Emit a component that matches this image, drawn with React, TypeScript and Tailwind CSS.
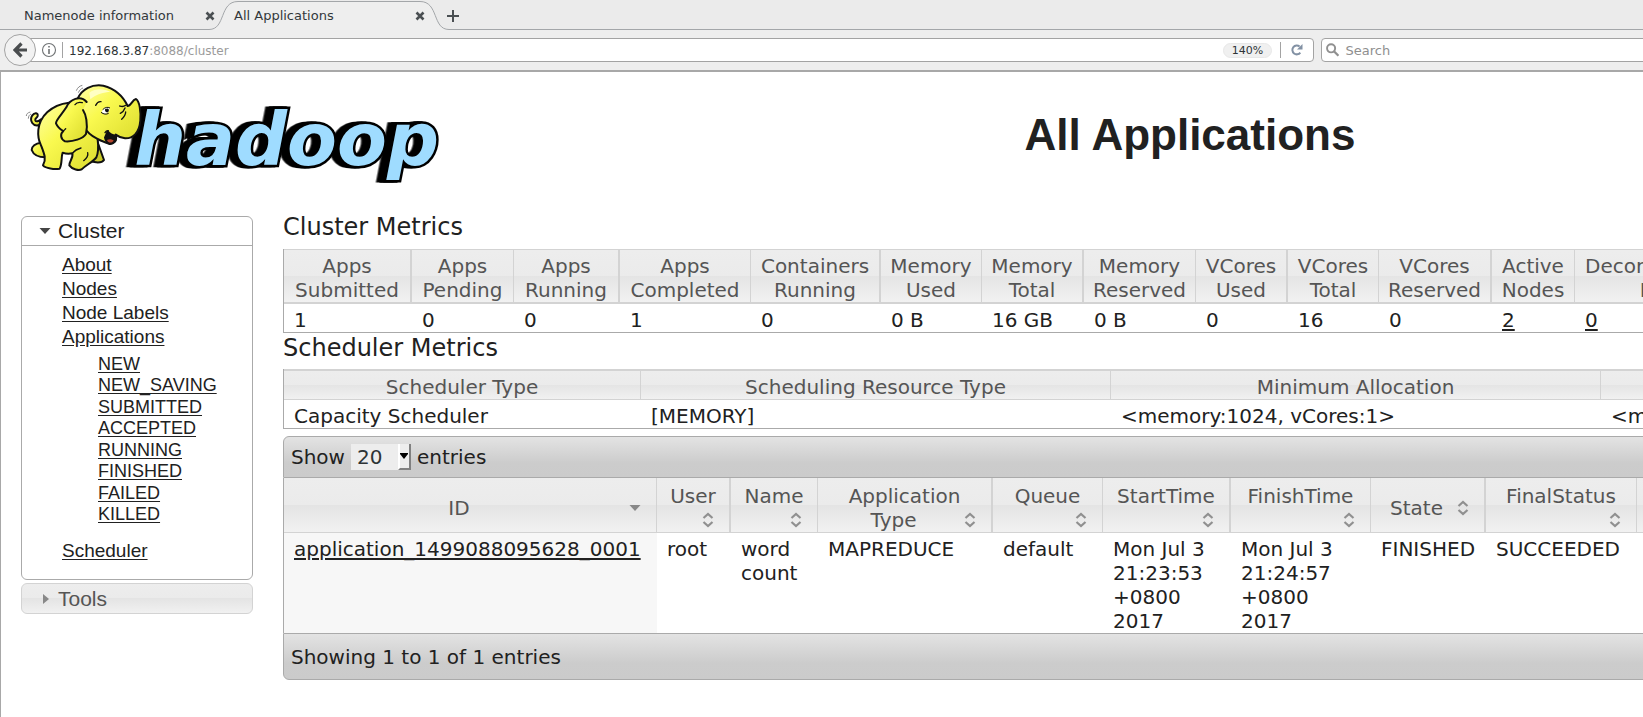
import React from "react";

const HEAD_BG = "bg-[linear-gradient(#ededed_0%,#ebebeb_50%,#e4e4e4_50%,#f1f1f1_100%)]";
const BAR_BG = "bg-[linear-gradient(#e3e3e3_0%,#cccccc_65%,#cbcbcb_100%)]";

function CloseIcon() {
  return (
    <svg width="10" height="10" viewBox="0 0 10 10" stroke="#4a4f52" strokeWidth="2.6" aria-hidden="true">
      <path d="M1.5 1.5 8.5 8.5M8.5 1.5 1.5 8.5" />
    </svg>
  );
}

function TabStrip() {
  return (
    <div className="relative flex h-[30px] bg-[#ebebeb] pt-0.5 text-[13px] text-[#33383b]">
      <svg className="absolute inset-0 h-[30px] w-full" aria-hidden="true">
        <path
          d="M209 29.5C226 29.5 219 1.5 238 1.5H420C439 1.5 432 29.5 449 29.5V31H209Z"
          fill="#eeeeee"
        />
        <path
          d="M0 29.5H209C226 29.5 219 1.5 238 1.5H420C439 1.5 432 29.5 449 29.5H4000"
          fill="none"
          stroke="#a3a6a9"
        />
      </svg>
      <div className="relative flex w-[234px] items-center justify-between pl-6 pr-[19px]">
        <a href="#namenode">Namenode information</a>
        <button aria-label="Close Namenode information"><CloseIcon /></button>
      </div>
      <div className="relative flex w-[209px] items-center justify-between pr-[18px]">
        <a href="#applications">All Applications</a>
        <button aria-label="Close All Applications"><CloseIcon /></button>
      </div>
      <button className="relative ml-1" aria-label="New tab">
        <svg width="12" height="12" viewBox="0 0 12 12" stroke="#4a4f52" strokeWidth="2">
          <path d="M6 0V12M0 6H12" />
        </svg>
      </button>
    </div>
  );
}

function NavBar() {
  return (
    <div className="flex h-[42px] items-center border-b-2 border-[#a8a8a8] bg-[#eeeeee] pl-1 text-[13px]">
      <button
        className="z-10 grid size-8 shrink-0 place-items-center rounded-full border border-[#a3a3a3] bg-[#f2f2f2]"
        aria-label="Back"
      >
        <svg width="14" height="16" viewBox="0 0 14 16" fill="none" stroke="#4a4d4f" strokeWidth="3.2">
          <path d="M8.5 1.5 2 8 8.5 14.5M2 8H14" />
        </svg>
      </button>
      <div className="-ml-2 flex h-6 w-[1286px] shrink-0 items-center rounded-r-sm border border-[#a3a3a3] bg-white pl-3">
        <svg width="16" height="16" viewBox="0 0 16 16" fill="none" stroke="#6f7274" aria-hidden="true">
          <circle cx="8" cy="8" r="6.5" strokeWidth="1.1" />
          <path d="M8 7V12M8 4V5.6" strokeWidth="1.6" />
        </svg>
        <span className="ml-[5px] h-4 border-l border-[#a3a3a3]" />
        <div className="ml-1.5 flex-1 pt-0.5 text-[12px] text-[#2e3436]">
          192.168.3.87<span className="text-[#9b9b9b]">:8088/cluster</span>
        </div>
        <button className="h-[15px] w-[49px] rounded-full border border-[#e8e8e8] bg-[#f0f0f0] text-[11px] leading-[13px] text-[#2e3436]">
          140%
        </button>
        <span className="ml-2 h-4 border-l border-[#a3a3a3]" />
        <button className="ml-2.5 mr-2.5" aria-label="Reload">
          <svg width="12" height="12" viewBox="0 0 12 12" fill="none" stroke="#8291a4" strokeWidth="2">
            <path d="M9.3 8.6A4.4 4.4 0 1 1 8.6 2.6" />
            <path d="M11.5 0V5.5H6Z" fill="#8291a4" stroke="none" />
          </svg>
        </button>
      </div>
      <label className="ml-[7px] flex h-6 w-[500px] shrink-0 items-center rounded-sm border border-[#a3a3a3] bg-white pl-1">
        <svg width="14" height="14" viewBox="0 0 14 14" fill="none" stroke="#909090" aria-hidden="true">
          <circle cx="5.3" cy="5.3" r="4.2" strokeWidth="2" />
          <path d="M8.5 8.5 13 13" strokeWidth="2.4" />
        </svg>
        <input
          className="ml-1.5 w-full pt-0.5 outline-none placeholder:text-[#8f8f8f]"
          placeholder="Search"
          aria-label="Search"
        />
      </label>
    </div>
  );
}

function HadoopLogo() {
  return (
    <svg className="block" width="420" height="107" viewBox="60 30 1260 321" role="img" aria-label="hadoop">
      <defs>
        <linearGradient id="hide" x1="0" y1="0" x2="1" y2="1">
          <stop offset="0" stopColor="#ffffa8" />
          <stop offset="0.4" stopColor="#f9f94f" />
          <stop offset="1" stopColor="#d9d92b" />
        </linearGradient>
      </defs>
      <text
        className="[filter:drop-shadow(-11px_0_0_#000)_drop-shadow(-11px_0_0_#000)]"
        x="400"
        y="285"
        fill="#9fdcff"
        stroke="#000"
        strokeWidth="15"
        strokeLinejoin="miter"
        paintOrder="stroke"
        fontFamily="DejaVu Sans"
        fontSize="218"
        fontWeight="bold"
        fontStyle="italic"
      >
        hadoop
      </text>
      <g stroke="#111" strokeWidth="6" strokeLinejoin="round" strokeLinecap="round" fill="url(#hide)">
        <path d="M116 165C96 172 84 152 94 136C101 126 112 128 110 138C108 145 101 144 103 151C105 156 112 154 120 148Z" />
        <path d="M120 218C103 220 92 230 92 240C98 256 116 262 134 262Z" />
        <path d="M288 212L309 270C302 281 284 278 268 274L278 236Z" fill="#c9c92a" />
        <path d="M204 98C150 104 116 140 112 180C110 200 114 214 120 226C130 252 137 268 126 286C134 295 160 299 176 296C184 280 180 262 185 248C195 252 205 252 214 250C218 264 204 274 205 286C214 299 234 302 242 298C256 284 276 276 286 262C294 245 292 225 290 208L310 140Z" />
        <path d="M230 86C243 56 273 42 307 47C345 57 366 78 380 108C390 108 393 90 405 87C416 94 420 125 418 152C415 190 395 206 372 205C360 204 352 200 344 194C350 214 336 224 323 221C310 216 298 212 288 206C268 196 256 184 250 170Z" />
        <path d="M312 203C316 224 334 226 344 210L344 197C332 196 326 192 320 184Z" fill="#111" />
        <path d="M257 96C238 74 206 88 196 112C182 134 164 150 165 160C170 172 178 178 187 183C177 192 178 206 192 214C216 216 246 206 255 192C262 162 254 132 246 120" />
        <path d="M222 104C226 98 236 96 244 98M187 183C190 181 192 178 194 176M214 250C222 240 232 236 240 234M260 248C262 256 256 266 248 272" fill="none" strokeWidth="4" />
        <path d="M284 106C288 98 294 94 300 95M356 108C362 110 366 112 374 106M358 130C366 126 370 120 372 114M362 148C368 142 374 134 374 126M312 188C314 184 318 182 322 182" fill="none" strokeWidth="4" />
      </g>
      <path d="M302 126C305 114 318 109 326 115C326 124 318 132 308 132Z" fill="#fff" />
      <path d="M312 118C320 112 327 116 322 126C317 129 311 126 312 118Z" fill="#111" />
      <path d="M300 127C308 133 316 134 323 130M305 119C312 112 320 110 327 114" fill="none" stroke="#111" strokeWidth="3" />
      <path d="M318 210C326 206 334 208 338 212C332 220 322 220 318 210Z" fill="#b5442d" />
      <path d="M226 62C230 52 236 48 244 46M232 68C236 60 240 56 246 54M76 138C76 132 80 128 88 126M82 146C82 138 86 134 90 132" fill="none" stroke="#888" strokeWidth="3" />
      <path d="M265 68C285 54 310 56 328 66C310 66 285 72 268 88Z" fill="#ffffc4" />
    </svg>
  );
}

const CLUSTER_LINKS = ["About", "Nodes", "Node Labels", "Applications"];
const STATE_LINKS = ["NEW", "NEW_SAVING", "SUBMITTED", "ACCEPTED", "RUNNING", "FINISHED", "FAILED", "KILLED"];

const LINK = "underline underline-offset-2";

function Sidebar() {
  return (
    <nav className="w-[232px] shrink-0 font-['Liberation_Sans',Arial,sans-serif] text-[19px] leading-6 text-[#212121]">
      <div className="h-[364px] rounded-md border border-[#aaaaaa] bg-white">
        <button className="flex h-[29px] w-full items-center border-b border-[#aaaaaa] pl-[17px] text-[21px]">
          <svg width="12" height="6" viewBox="0 0 12 6" className="mr-[7px]" aria-hidden="true">
            <path d="M0.5 0H11.5L6 6Z" fill="#454545" />
          </svg>
          Cluster
        </button>
        <ul className="pl-10 pt-[7px]">
          {CLUSTER_LINKS.map((t) => (
            <li key={t}><a className={LINK} href="#cluster">{t}</a></li>
          ))}
          <li>
            <ul className="mb-[14px] mt-[5px] flex h-[171px] flex-col justify-between pl-9 text-[18px] leading-[21px]">
              {STATE_LINKS.map((t) => (
                <li key={t}><a className={LINK} href="#apps">{t}</a></li>
              ))}
            </ul>
          </li>
          <li><a className={LINK} href="#scheduler">Scheduler</a></li>
        </ul>
      </div>
      <button className={`mt-[3px] flex h-[31px] w-full items-center rounded-md border border-[#d3d3d3] pl-[21px] text-[21px] text-[#555555] ${HEAD_BG}`}>
        <svg width="6" height="12" viewBox="0 0 6 12" className="mr-[9px]" aria-hidden="true">
          <path d="M0 1V11L6 6Z" fill="#888888" />
        </svg>
        Tools
      </button>
    </nav>
  );
}

type Metric = { label: string[]; value: string; width: string; link?: boolean };

const METRICS: Metric[] = [
  { label: ["Apps", "Submitted"], value: "1", width: "w-[128px]" },
  { label: ["Apps", "Pending"], value: "0", width: "w-[102px]" },
  { label: ["Apps", "Running"], value: "0", width: "w-[106px]" },
  { label: ["Apps", "Completed"], value: "1", width: "w-[131px]" },
  { label: ["Containers", "Running"], value: "0", width: "w-[130px]" },
  { label: ["Memory", "Used"], value: "0 B", width: "w-[101px]" },
  { label: ["Memory", "Total"], value: "16 GB", width: "w-[102px]" },
  { label: ["Memory", "Reserved"], value: "0 B", width: "w-[112px]" },
  { label: ["VCores", "Used"], value: "0", width: "w-[92px]" },
  { label: ["VCores", "Total"], value: "16", width: "w-[91px]" },
  { label: ["VCores", "Reserved"], value: "0", width: "w-[113px]" },
  { label: ["Active", "Nodes"], value: "2", width: "w-[83px]", link: true },
  { label: ["Decommissioned", "Nodes"], value: "0", width: "w-[194px]", link: true },
  { label: [], value: "", width: "w-auto" },
];

const TABLE = "w-full table-fixed border-separate border-spacing-0 border-l border-[#aaaaaa]";
const TH = `border-r border-[#d3d3d3] font-normal text-[#555555] ${HEAD_BG}`;

function ClusterMetrics() {
  return (
    <table className={`${TABLE} border-b`}>
      <thead>
        <tr>
          {METRICS.map((m, i) => (
            <th key={i} className={`${TH} ${m.width} h-[55px] border-b-2 border-t px-0 pt-1 odd:border-r-2`}>
              {m.label.map((l) => (
                <span key={l} className="block">{l}</span>
              ))}
            </th>
          ))}
        </tr>
      </thead>
      <tbody>
        <tr>
          {METRICS.map((m, i) => (
            <td key={i} className="h-[28px] pl-2.5 pt-1">
              {m.link ? <a className={LINK} href="#nodes">{m.value}</a> : m.value}
            </td>
          ))}
        </tr>
      </tbody>
    </table>
  );
}

function SchedulerMetrics() {
  return (
    <table className={`${TABLE} border-b`}>
      <thead>
        <tr>
          <th className={`${TH} h-[31px] w-[357px] border-b border-t-2 pt-1`}>Scheduler Type</th>
          <th className={`${TH} w-[470px] border-b border-t-2 pt-1`}>Scheduling Resource Type</th>
          <th className={`${TH} w-[490px] border-b border-t-2 pt-1`}>Minimum Allocation</th>
          <th className={`${TH} border-b border-t-2 pt-1`}>Maximum Allocation</th>
        </tr>
      </thead>
      <tbody>
        <tr>
          <td className="h-[28px] pl-2.5 pt-1">Capacity Scheduler</td>
          <td className="pl-2.5 pt-1">[MEMORY]</td>
          <td className="pl-2.5 pt-1">&lt;memory:1024, vCores:1&gt;</td>
          <td className="pl-2.5 pt-1">&lt;memory:8192, vCores:8&gt;</td>
        </tr>
      </tbody>
    </table>
  );
}

type AppColumn = { head: string[]; cell: string[]; width: string };

const APP_COLUMNS: AppColumn[] = [
  { head: ["ID"], cell: ["application_1499088095628_0001"], width: "w-[373px]" },
  { head: ["User", ""], cell: ["root"], width: "w-[74px]" },
  { head: ["Name", ""], cell: ["word", "count"], width: "w-[87px]" },
  { head: ["Application", "Type"], cell: ["MAPREDUCE"], width: "w-[175px]" },
  { head: ["Queue", ""], cell: ["default"], width: "w-[110px]" },
  { head: ["StartTime", ""], cell: ["Mon Jul 3", "21:23:53", "+0800", "2017"], width: "w-[128px]" },
  { head: ["FinishTime", ""], cell: ["Mon Jul 3", "21:24:57", "+0800", "2017"], width: "w-[140px]" },
  { head: ["State"], cell: ["FINISHED"], width: "w-[115px]" },
  { head: ["FinalStatus", ""], cell: ["SUCCEEDED"], width: "w-[151px]" },
  { head: [], cell: [], width: "w-auto" },
];

function SortIcon({ active }: { active: boolean }) {
  return (
    <span className="grid w-[22px] shrink-0 place-items-center">
      {active ? (
        <svg width="12" height="6" viewBox="0 0 12 6" aria-hidden="true">
          <path d="M0.5 0H11.5L6 6Z" fill="#888888" />
        </svg>
      ) : (
        <svg width="12" height="16" viewBox="0 0 12 16" fill="none" stroke="#909090" strokeWidth="2.2" aria-hidden="true">
          <path d="M1.5 6 6 2 10.5 6M1.5 10 6 14 10.5 10" />
        </svg>
      )}
    </span>
  );
}

function Applications() {
  return (
    <section className="mt-[7px]">
      <div className={`flex h-[42px] items-center rounded-tl-md border border-[#aaaaaa] pl-[7px] ${BAR_BG}`}>
        <label htmlFor="page-size">Show</label>
        <span className="relative mx-1.5 flex h-[26px] w-[60px] bg-[#ededed]">
          <select id="page-size" className="w-full appearance-none pl-1.5 text-[#2e3436] outline-none" defaultValue="20">
            <option>20</option>
            <option>50</option>
            <option>100</option>
          </select>
          <span className="pointer-events-none absolute inset-y-0 right-0 grid w-[13px] place-items-center border-b-2 border-l-2 border-r-2 border-b-[#808080] border-l-white border-r-[#808080]">
            <svg width="8" height="6" viewBox="0 0 8 6"><path d="M0 0H8V1L4 6 0 1Z" fill="#000" /></svg>
          </span>
        </span>
        <label htmlFor="page-size">entries</label>
      </div>
      <table className={TABLE}>
        <thead>
          <tr>
            {APP_COLUMNS.map((c, i) => (
              <th key={i} className={`${TH} ${c.width} h-[55px] border-b px-2.5 pt-[5px] even:border-r-2`}>
                {c.head.length > 0 && (
                  <button className="block w-full">
                    {c.head.map((line, n) => (
                      <span key={n} className="flex h-6 items-center">
                        <span className="flex-1 text-center">{line}</span>
                        {n === c.head.length - 1 && <SortIcon active={i === 0} />}
                      </span>
                    ))}
                  </button>
                )}
              </th>
            ))}
          </tr>
        </thead>
        <tbody>
          <tr>
            {APP_COLUMNS.map((c, i) => (
              <td key={i} className="h-[100px] pl-2.5 pt-1 align-top first:bg-[#f7f7f7]">
                {i === 0 ? (
                  <a className={LINK} href="#app">{c.cell[0]}</a>
                ) : (
                  c.cell.map((l) => <span key={l} className="block whitespace-nowrap">{l}</span>)
                )}
              </td>
            ))}
          </tr>
        </tbody>
      </table>
      <div className={`flex h-[47px] items-center rounded-bl-md border border-[#aaaaaa] pl-[7px] ${BAR_BG}`}>
        Showing 1 to 1 of 1 entries
      </div>
    </section>
  );
}

export default function App() {
  return (
    <div className="flex min-h-screen flex-col overflow-x-hidden bg-white font-['DejaVu_Sans',Verdana,sans-serif]">
      <TabStrip />
      <NavBar />
      <div className="flex-1 border-l border-[#a8a8a8] pl-5 text-[#212121]">
        <header className="flex h-[144px] pt-2">
          <div className="w-[262px] shrink-0"><HadoopLogo /></div>
          <h1 className="w-full min-w-[1814px] pt-[31px] text-center font-['Liberation_Sans',Arial,sans-serif] text-[44px] font-bold leading-[48px]">
            All Applications
          </h1>
        </header>
        <div className="flex gap-[30px]">
          <Sidebar />
          <main className="w-full min-w-[1814px] text-[20px] leading-6">
            <h2 className="h-[33px] text-[24px] leading-[22px]">Cluster Metrics</h2>
            <ClusterMetrics />
            <h2 className="h-9 pt-[3px] text-[24px] leading-6">Scheduler Metrics</h2>
            <SchedulerMetrics />
            <Applications />
          </main>
        </div>
      </div>
    </div>
  );
}
